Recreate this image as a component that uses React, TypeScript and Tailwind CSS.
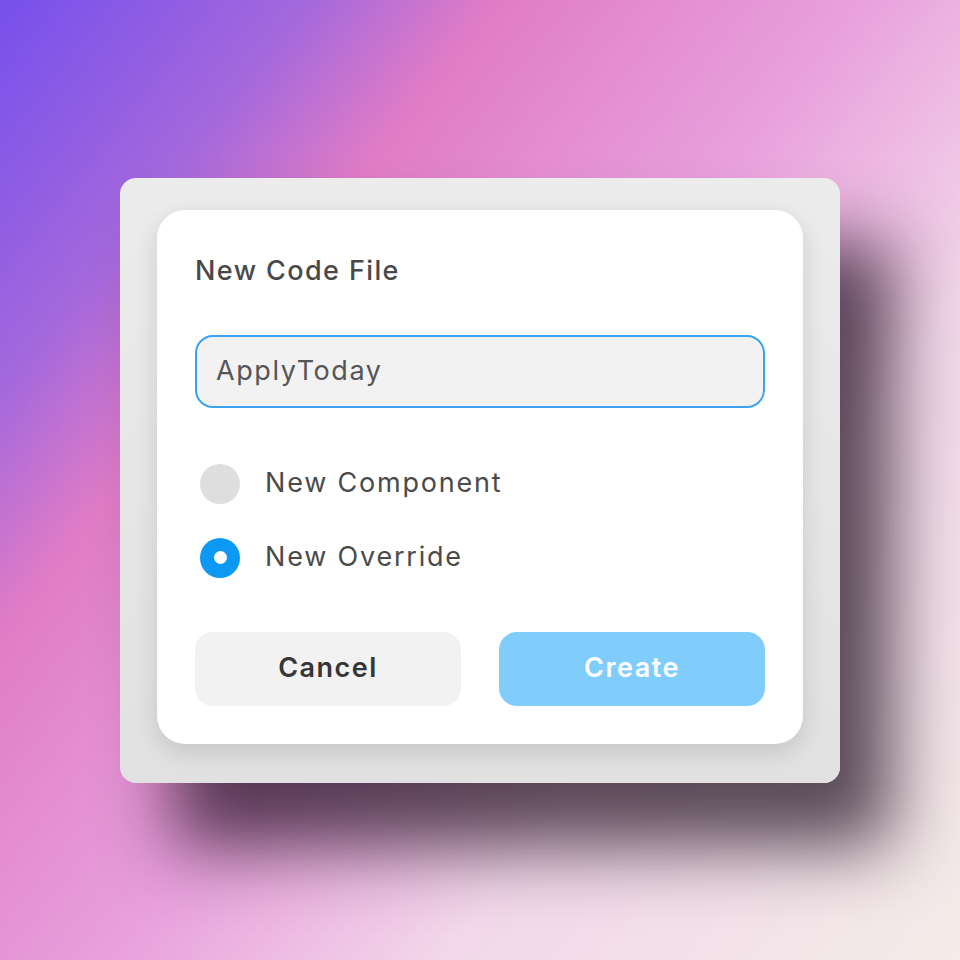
export default function App() {
  return (
    <div className="min-h-screen w-full flex items-center justify-center bg-[linear-gradient(128deg,#7650ec_0%,#a468dc_18%,#e07cc6_29%,#e8a0dc_50%,#edb6e2_58%,#f2d8ea_70%,#f4ece8_100%)] font-['Inter',sans-serif]">
      {/* outer frame */}
      <div className="w-[720px] rounded-[16px] bg-[linear-gradient(180deg,#ececec,#e1e1e1)] px-[37px] pt-[32px] pb-[39px] shadow-[52px_64px_70px_rgba(30,15,30,0.72)]">
        {/* dialog */}
        <div className="flex flex-col rounded-[28px] bg-white px-[38px] pt-[45px] pb-[38px] shadow-[0_8px_24px_rgba(0,0,0,0.13)]">
          <div className="h-[32px] leading-[32px] text-[27px] font-medium text-[#494949] tracking-[1.4px]">
            New Code File
          </div>

          <div className="mt-[48px] flex h-[73px] items-center rounded-[18px] border-2 border-[#3ba3f0] bg-[#f2f2f2] px-[19px] text-[27px] text-[#555555] tracking-[1.6px]">
            ApplyToday
          </div>

          <div className="mt-[56px] flex h-[40px] items-center gap-[25px] pl-[5px]">
            <div className="h-[40px] w-[40px] rounded-full bg-[#dedede]" />
            <span className="text-[27px] text-[#4a4a4a] tracking-[1.8px]">New Component</span>
          </div>

          <div className="mt-[34px] flex h-[40px] items-center gap-[25px] pl-[5px]">
            <div className="flex h-[40px] w-[40px] items-center justify-center rounded-full bg-[#0b99f3]">
              <div className="h-[13px] w-[13px] rounded-full bg-white" />
            </div>
            <span className="text-[27px] text-[#4a4a4a] tracking-[1.8px]">New Override</span>
          </div>

          <div className="mt-[54px] grid grid-cols-2 gap-[38px]">
            <button className="h-[74px] rounded-[18px] bg-[#f2f2f2] text-[27px] font-semibold text-[#363636] tracking-[1.5px]">
              Cancel
            </button>
            <button className="h-[74px] rounded-[18px] bg-[#80cdfc] text-[27px] font-semibold text-white tracking-[1.5px]">
              Create
            </button>
          </div>
        </div>
      </div>
    </div>
  );
}
